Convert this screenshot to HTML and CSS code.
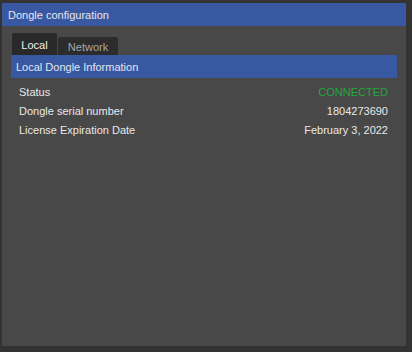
FILE: index.html
```html
<!DOCTYPE html>
<html lang="en">
<head>
    <meta charset="UTF-8">
    <meta name="viewport" content="width=device-width, initial-scale=1.0">
    <title>Dongle configuration</title>
    <link rel="stylesheet" href="styles.css">
</head>
<body>
    <div class="dialog">
        <div class="dialog-title">Dongle configuration</div>
        <div class="dialog-body">
            <div class="tabs">
                <div class="tab tab-active">Local</div>
                <div class="tab">Network</div>
            </div>
            <div class="section-title">Local Dongle Information</div>
            <div class="info-list">
                <div class="info-row">
                    <span>Status</span>
                    <span class="status-connected">CONNECTED</span>
                </div>
                <div class="info-row">
                    <span>Dongle serial number</span>
                    <span>1804273690</span>
                </div>
                <div class="info-row">
                    <span>License Expiration Date</span>
                    <span>February 3, 2022</span>
                </div>
            </div>
        </div>
    </div>
</body>
</html>
```

FILE: styles.css
```css
body{
    margin: 0;
    background-color: #333333;
    font-family: "Liberation Sans", Arial, sans-serif;
    font-size: 11px;
    color: #e8e8e8;
}

.dialog{
    margin: 3px 6px 0 2px;
    height: 343px;
    background-color: #484848;
    display: flex;
    flex-direction: column;
}

.dialog-title{
    height: 23px;
    line-height: 25px;
    padding-left: 6px;
    background-color: #3858a2;
    color: #e6e6ee;
}

.dialog-body{
    padding: 7px 9px 0 9px;
}

.tabs{
    display: flex;
    align-items: flex-end;
    gap: 1px;
    padding-left: 1px;
    height: 22px;
}

.tab{
    width: 60px;
    height: 18px;
    line-height: 20px;
    text-align: center;
    background-color: #2c2c2c;
    color: #a8a8a8;
    border-radius: 2px 2px 0 0;
}

.tab-active{
    width: 45px;
    height: 22px;
    line-height: 24px;
    background-color: #292929;
    color: #f2f2f2;
}

.section-title{
    height: 23px;
    line-height: 25px;
    padding-left: 5px;
    background-color: #3858a2;
    color: #e6e6ee;
}

.info-list{
    padding: 4px 9px 0 8px;
}

.info-row{
    display: flex;
    justify-content: space-between;
    height: 19px;
    line-height: 21px;
}

.status-connected{
    color: #22a83a;
}
```
